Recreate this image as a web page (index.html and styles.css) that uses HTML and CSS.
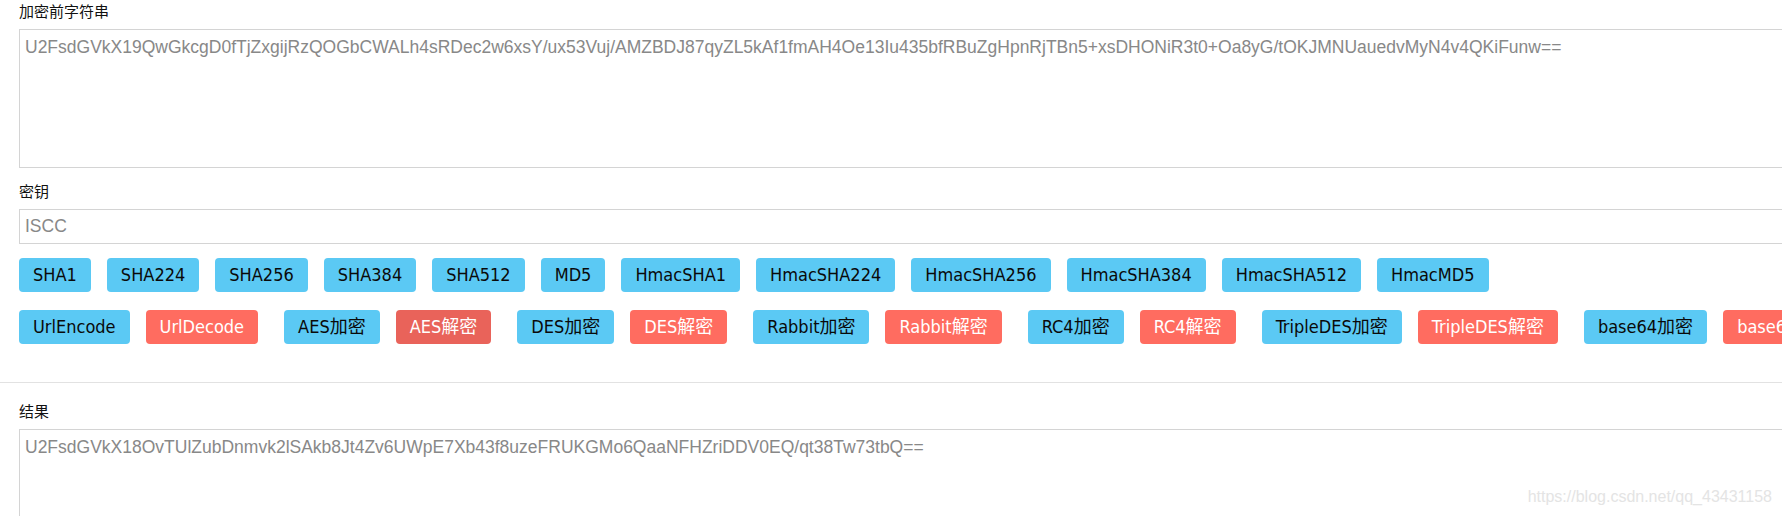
FILE: index.html
```html
<!DOCTYPE html>
<html lang="zh-CN">
<head>
<meta charset="utf-8">
<title>加密解密</title>
<link rel="stylesheet" href="styles.css">
</head>
<body>
<div class="page">
  <div class="field">
    <label class="label">加密前字符串</label>
    <textarea class="area area-src">U2FsdGVkX19QwGkcgD0fTjZxgijRzQOGbCWALh4sRDec2w6xsY/ux53Vuj/AMZBDJ87qyZL5kAf1fmAH4Oe13Iu435bfRBuZgHpnRjTBn5+xsDHONiR3t0+Oa8yG/tOKJMNUauedvMyN4v4QKiFunw==</textarea>
  </div>
  <div class="field field-key">
    <label class="label">密钥</label>
    <input class="key" type="text" value="ISCC">
  </div>
  <div class="btn-row row-hash">
    <button class="btn btn-info">SHA1</button>
    <button class="btn btn-info">SHA224</button>
    <button class="btn btn-info">SHA256</button>
    <button class="btn btn-info">SHA384</button>
    <button class="btn btn-info">SHA512</button>
    <button class="btn btn-info">MD5</button>
    <button class="btn btn-info">HmacSHA1</button>
    <button class="btn btn-info">HmacSHA224</button>
    <button class="btn btn-info">HmacSHA256</button>
    <button class="btn btn-info">HmacSHA384</button>
    <button class="btn btn-info">HmacSHA512</button>
    <button class="btn btn-info">HmacMD5</button>
  </div>
  <div class="btn-row row-cipher">
    <div class="pair"><button class="btn btn-info">UrlEncode</button><button class="btn btn-danger">UrlDecode</button></div>
    <div class="pair"><button class="btn btn-info">AES加密</button><button class="btn btn-danger btn-active">AES解密</button></div>
    <div class="pair"><button class="btn btn-info">DES加密</button><button class="btn btn-danger">DES解密</button></div>
    <div class="pair"><button class="btn btn-info">Rabbit加密</button><button class="btn btn-danger">Rabbit解密</button></div>
    <div class="pair"><button class="btn btn-info">RC4加密</button><button class="btn btn-danger">RC4解密</button></div>
    <div class="pair"><button class="btn btn-info">TripleDES加密</button><button class="btn btn-danger">TripleDES解密</button></div>
    <div class="pair"><button class="btn btn-info">base64加密</button><button class="btn btn-danger">base64解密</button></div>
  </div>
</div>
<hr class="divider">
<div class="page page-result">
  <div class="field">
    <label class="label">结果</label>
    <textarea class="area area-result">U2FsdGVkX18OvTUlZubDnmvk2lSAkb8Jt4Zv6UWpE7Xb43f8uzeFRUKGMo6QaaNFHZriDDV0EQ/qt38Tw73tbQ==</textarea>
  </div>
</div>
<div class="watermark">https://blog.csdn.net/qq_43431158</div>
</body>
</html>
```
FILE: styles.css
```css
html, body {
  margin: 0;
  padding: 0;
  background: #ffffff;
  overflow: hidden;
}
body {
  position: relative;
  width: 1782px;
  height: 516px;
  font-family: "Liberation Sans", "Noto Sans CJK SC", sans-serif;
}
.page {
  width: 1900px;
  padding: 0 0 0 19px;
}
.field {
  display: flex;
  flex-direction: column;
}
.field-key {
  margin-top: 12px;
}
.label {
  display: block;
  font-family: "Noto Sans CJK SC", sans-serif;
  font-size: 15px;
  line-height: 22px;
  color: #111;
  margin-bottom: 7px;
}
.area {
  box-sizing: border-box;
  width: 100%;
  resize: none;
  border: 1px solid #d4d4d4;
  border-radius: 0;
  padding: 7px 5px;
  font-family: "Liberation Sans", Arial, sans-serif;
  font-size: 17.5px;
  line-height: 21px;
  color: #888;
  background: #fff;
  margin: 0;
  outline: none;
}
.area-src {
  height: 139px;
}
.area-result {
  height: 120px;
}
.key {
  box-sizing: border-box;
  width: 100%;
  height: 35px;
  border: 1px solid #d4d4d4;
  padding: 0 5px;
  font-family: "Liberation Sans", Arial, sans-serif;
  font-size: 17.5px;
  color: #888;
  margin: 0;
  outline: none;
}
.btn-row {
  display: flex;
  flex-wrap: nowrap;
  white-space: nowrap;
}
.row-hash {
  margin-top: 14px;
  gap: 16px;
}
.row-cipher {
  margin-top: 18px;
  gap: 26px;
}
.pair {
  display: flex;
  gap: 16px;
}
.btn {
  box-sizing: border-box;
  height: 34px;
  padding: 0 14px;
  border: none;
  border-radius: 4px;
  font-family: "DejaVu Sans Condensed", "DejaVu Sans", "Noto Sans CJK SC", sans-serif;
  font-stretch: condensed;
  font-size: 18px;
  line-height: 34px;
  cursor: pointer;
  flex: none;
}
.btn-info {
  background: #5bc9f4;
  color: #0a0a0a;
}
.btn-danger {
  background: #ff6c60;
  color: #ffffff;
}
.btn-active {
  background: #e9635a;
}
.divider {
  margin: 38px 0 0 0;
  border: 0;
  border-top: 1px solid #e2e2e2;
  height: 0;
}
.page-result {
  margin-top: 17px;
}
.watermark {
  position: absolute;
  right: 10px;
  top: 488px;
  font-family: "Liberation Sans", Arial, sans-serif;
  font-size: 16px;
  color: #e4e4e4;
}
```
